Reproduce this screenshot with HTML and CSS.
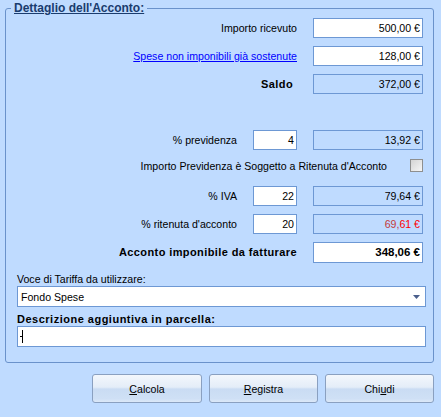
FILE: index.html
```html
<!DOCTYPE html>
<html lang="it">
<head>
<meta charset="utf-8">
<title>Dettaglio dell'Acconto</title>
<link rel="stylesheet" href="styles.css">
</head>
<body>
<fieldset class="group">
  <legend class="legend">Dettaglio dell'Acconto:</legend>
  <div class="grid">
    <div class="label span2">Importo ricevuto</div>
    <div class="field">500,00 €</div>

    <div class="label span2"><a class="link" href="#">Spese non imponibili già sostenute</a></div>
    <div class="field">128,00 €</div>

    <div class="label span2 bold saldo">Saldo</div>
    <div class="field ro">372,00 €</div>

    <div class="spacer"></div>

    <div class="label">% previdenza</div>
    <div class="field">4</div>
    <div class="field ro">13,92 €</div>

    <div class="checkrow">
      <span class="checktext">Importo Previdenza è Soggetto a Ritenuta d'Acconto</span>
      <span class="check"></span>
    </div>

    <div class="label">% IVA</div>
    <div class="field">22</div>
    <div class="field ro">79,64 €</div>

    <div class="label">% ritenuta d'acconto</div>
    <div class="field">20</div>
    <div class="field ro"><span class="darkred">69,</span><span class="red">61 €</span></div>

    <div class="label span2 bold">Acconto imponibile da fatturare</div>
    <div class="field total">348,06 €</div>
  </div>

  <div class="sublabel">Voce di Tariffa da utilizzare:</div>
  <div class="combo">
    <span>Fondo Spese</span>
    <svg class="arrow" width="7" height="4" viewBox="0 0 7 4"><path d="M0 0H7L3.5 4Z" fill="#4A5F8C"/></svg>
  </div>

  <div class="desclabel bold">Descrizione aggiuntiva in parcella:</div>
  <div class="textbox"><span class="caret"></span></div>
</fieldset>

<div class="buttons">
  <button class="btn w110"><u>C</u>alcola</button>
  <button class="btn"><u>R</u>egistra</button>
  <button class="btn">Chi<u>u</u>di</button>
</div>
</body>
</html>
```
FILE: styles.css
```css
html, body {
  margin: 0;
  padding: 0;
}
body {
  background: #BFDBFF;
  font-family: "Liberation Sans", Arial, sans-serif;
  font-size: 10.6px;
  color: #000;
  width: 441px;
  height: 417px;
  overflow: hidden;
}
.group {
  margin: 1px 0 0 5px;
  width: 429px;
  box-sizing: border-box;
  border: 1px solid #6A92CB;
  border-radius: 3px;
  padding: 3px 7px 15px 11px;
  min-inline-size: 0;
}
.legend {
  margin-left: -6px;
  padding: 0 3px;
  font-size: 12px;
  font-weight: bold;
  line-height: 14px;
  color: #1A3C6E;
  text-decoration: underline;
}
.grid {
  display: grid;
  grid-template-columns: 1fr 44px 110px;
  grid-auto-rows: 20px;
  row-gap: 8px;
  column-gap: 16px;
  margin-right: 3px;
}
.label {
  text-align: right;
  align-self: center;
  line-height: 14px;
  white-space: nowrap;
}
.span2 {
  grid-column: 1 / 3;
}
.bold {
  font-weight: bold;
  font-size: 11px;
  letter-spacing: 0.4px;
}
.saldo {
  margin-right: 4px;
}
.link {
  color: #0000FF;
  text-decoration: underline;
}
.field {
  border: 1px solid #6D98D4;
  background: #fff;
  box-sizing: border-box;
  text-align: right;
  padding-right: 2px;
  line-height: 18px;
  white-space: nowrap;
}
.ro {
  background: transparent;
}
.total {
  font-weight: bold;
  font-size: 11.5px;
  height: 21px;
  line-height: 19px;
}
.darkred {
  color: #C43A3A;
}
.red {
  color: #FF0000;
}
.spacer {
  grid-column: 1 / -1;
}
.checkrow {
  grid-column: 1 / -1;
  display: flex;
  justify-content: flex-end;
  align-items: flex-start;
  gap: 23px;
  padding-top: 1px;
}
.checktext {
  line-height: 14px;
}
.check {
  width: 13px;
  height: 13px;
  box-sizing: border-box;
  border: 1px solid #8E8F8F;
  background: linear-gradient(135deg, #D4D4D4, #F6F6F6);
}
.sublabel {
  margin-top: 10px;
  line-height: 14px;
}
.combo {
  height: 21px;
  box-sizing: border-box;
  border: 1px solid #6D98D4;
  background: #fff;
  display: flex;
  align-items: center;
  justify-content: space-between;
  padding: 0 5px 0 3px;
}
.arrow {
  display: block;
}
.desclabel {
  margin-top: 6px;
  line-height: 13px;
  letter-spacing: 0.5px;
}
.textbox {
  height: 21px;
  box-sizing: border-box;
  border: 1px solid #6D98D4;
  background: #fff;
  display: flex;
  align-items: center;
  padding-left: 4px;
}
.caret {
  position: relative;
  display: block;
  width: 1px;
  height: 13px;
  background: #000;
}
.caret::before {
  content: "";
  position: absolute;
  left: -2px;
  top: 6px;
  width: 2px;
  height: 1px;
  background: #000;
}
.buttons {
  display: flex;
  justify-content: flex-end;
  gap: 7px;
  margin: 11px 7px 0 0;
}
.btn {
  width: 109px;
  height: 29px;
  box-sizing: border-box;
  border: 1px solid #8AA0C0;
  border-radius: 3px;
  background: linear-gradient(#F3F7FC 0%, #E4EDF8 45%, #CADCF3 52%, #CFE0F5 88%, #DCE8F8 100%);
  font-family: "Liberation Sans", Arial, sans-serif;
  font-size: 10.6px;
  color: #000;
  padding: 0;
}
.w110 {
  width: 110px;
}
```
